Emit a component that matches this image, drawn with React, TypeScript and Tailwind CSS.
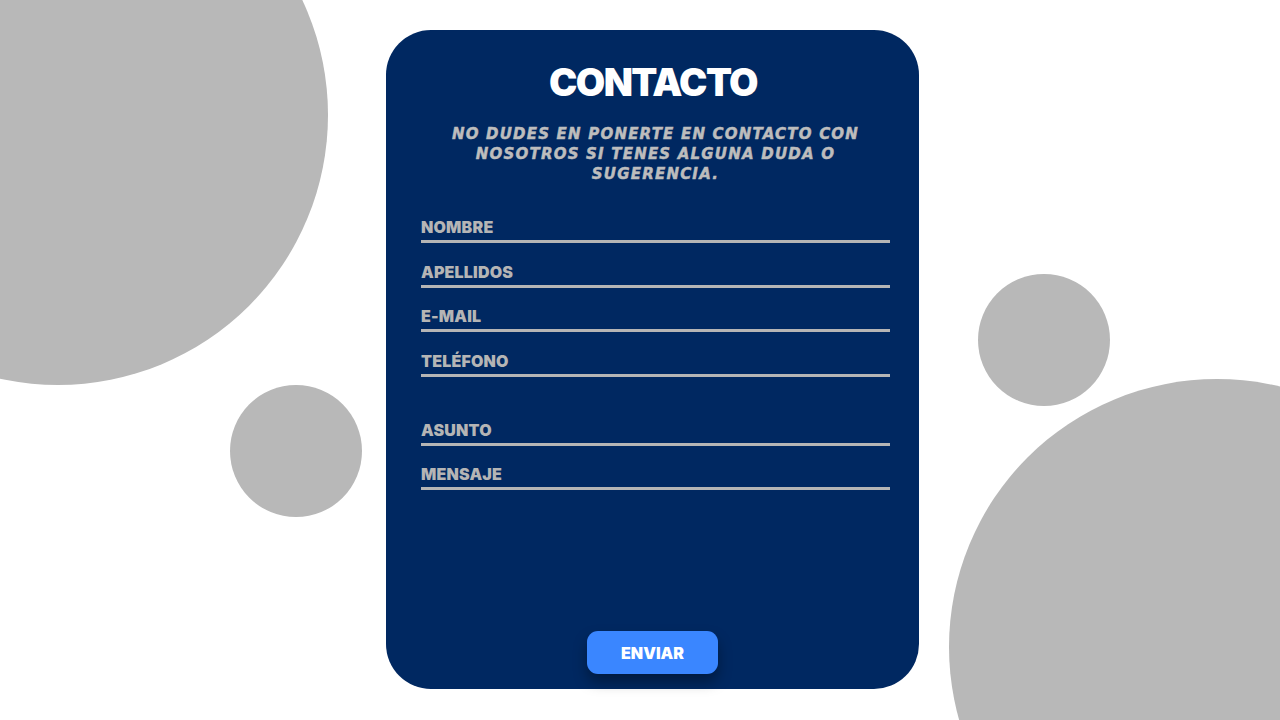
const fields = ["NOMBRE", "APELLIDOS", "E-MAIL", "TELÉFONO"];
const extra = ["ASUNTO", "MENSAJE"];

const Field = ({ label }: { label: string }) => (
  <div className="flex flex-col">
    <span className="h-[22px] text-[16px] leading-[22px] font-black tracking-[0.2px] text-[#b5b5b5]">{label}</span>
    <div className="mt-[2px] h-[3px] w-full bg-[#b5b5b5]" />
  </div>
);

export default function App() {
  return (
    <div className="relative h-[720px] w-[1280px] overflow-hidden bg-white font-['Inter',sans-serif]">
      {/* background circles */}
      <div className="absolute left-[-212px] top-[-155px] h-[540px] w-[540px] rounded-full bg-[#b8b8b8]" />
      <div className="absolute left-[230px] top-[385px] h-[132px] w-[132px] rounded-full bg-[#b8b8b8]" />
      <div className="absolute left-[978px] top-[274px] h-[132px] w-[132px] rounded-full bg-[#b8b8b8]" />
      <div className="absolute left-[949px] top-[379px] h-[536px] w-[536px] rounded-full bg-[#b8b8b8]" />

      <div className="relative flex justify-center pl-[25px] pt-[30px]">
        <div className="flex h-[659px] w-[533px] flex-col rounded-[45px] bg-[#002861] pl-[35px] pr-[29px] pb-[15px]">
          <h1 className="mt-[30px] pr-[5px] text-center text-[38px] font-black leading-[44px] tracking-[-1.6px] text-white">
            CONTACTO
          </h1>
          <p className="mx-auto mt-[20px] text-center font-['DejaVu_Sans',sans-serif] text-[15px] font-bold italic leading-[20px] tracking-[1.2px] text-[#bdbdbd] [-webkit-text-stroke:0.5px_#bdbdbd]">
            NO DUDES EN PONERTE EN CONTACTO CON
            <br />
            NOSOTROS SI TENES ALGUNA DUDA O
            <br />
            SUGERENCIA.
          </p>
          <div className="mt-[32px] flex flex-col gap-[17.5px]">
            {fields.map((f) => (
              <Field key={f} label={f} />
            ))}
          </div>
          <div className="mt-[42px] flex flex-col gap-[17.5px]">
            {extra.map((f) => (
              <Field key={f} label={f} />
            ))}
          </div>
          <div className="mt-auto flex justify-center pr-[6px]">
            <button className="h-[43px] w-[131px] rounded-[11px] bg-[#3a86ff] text-[16px] font-black text-white shadow-[0_8px_14px_rgba(0,0,0,0.35)]">
              ENVIAR
            </button>
          </div>
        </div>
      </div>
    </div>
  );
}
